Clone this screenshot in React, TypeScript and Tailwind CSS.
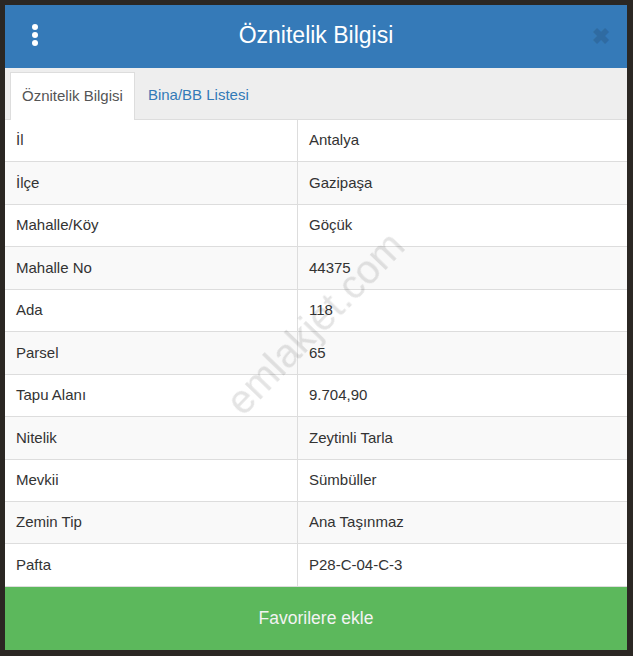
import React from "react";

const rows: [string, string][] = [
  ["İl", "Antalya"],
  ["İlçe", "Gazipaşa"],
  ["Mahalle/Köy", "Göçük"],
  ["Mahalle No", "44375"],
  ["Ada", "118"],
  ["Parsel", "65"],
  ["Tapu Alanı", "9.704,90"],
  ["Nitelik", "Zeytinli Tarla"],
  ["Mevkii", "Sümbüller"],
  ["Zemin Tip", "Ana Taşınmaz"],
  ["Pafta", "P28-C-04-C-3"],
];

export default function App() {
  return (
    <div
      className="w-[633px] h-[656px] bg-[#2b2723] pt-[5px] pl-[5px] overflow-hidden relative"
      style={{ fontFamily: '"Liberation Sans", Arial, sans-serif' }}
    >
      <div className="w-[622px] h-[645px] bg-white flex flex-col relative overflow-hidden">
        <div className="h-[63px] bg-[#357ab8] flex items-center relative shrink-0">
          <div className="absolute left-[27px] top-[19px] flex flex-col gap-[2px]">
            <span className="block w-[6px] h-[6px] rounded-full bg-white" />
            <span className="block w-[6px] h-[6px] rounded-full bg-white" />
            <span className="block w-[6px] h-[6px] rounded-full bg-white" />
          </div>
          <div className="flex-1 text-center text-white text-[23px] leading-none pb-[2px]">Öznitelik Bilgisi</div>
          <div className="absolute right-[17px] top-[21px] text-[#2f6ba2] text-[22px] font-bold leading-none">✖</div>
        </div>
        <div className="h-[52px] bg-[#eeeeee] flex items-end px-[5px] border-b border-[#dddddd] shrink-0">
          <div className="h-[48px] bg-white border border-b-0 border-[#dddddd] px-[11px] flex items-center text-[#555555] text-[15px] -mb-px">
            Öznitelik Bilgisi
          </div>
          <div className="h-[48px] px-[13px] flex items-center text-[#337ab7] text-[15px]">Bina/BB Listesi</div>
        </div>
        <div className="flex flex-col">
          {rows.map(([k, v], i) => (
            <div
              key={k}
              className={`grid grid-cols-[293px_1fr] h-[42.45px] border-b border-[#dddddd] text-[15px] text-[#333333] ${
                i % 2 === 1 ? "bg-[#f9f9f9]" : "bg-white"
              }`}
            >
              <div className="pl-[11px] flex items-center border-r border-[#dddddd]">{k}</div>
              <div className="pl-[11px] flex items-center">{v}</div>
            </div>
          ))}
        </div>
        <div className="flex-1 bg-[#5cb85c] flex items-center justify-center text-[#f3f3f3] text-[17.5px]">
          Favorilere ekle
        </div>
        <div className="absolute left-[310px] top-[318px] pointer-events-none mix-blend-multiply">
          <div className="-translate-x-1/2 -translate-y-1/2 -rotate-[46deg] text-[40px] text-[#e4e4e4] whitespace-nowrap">
            emlakjet.com
          </div>
        </div>
      </div>
    </div>
  );
}
